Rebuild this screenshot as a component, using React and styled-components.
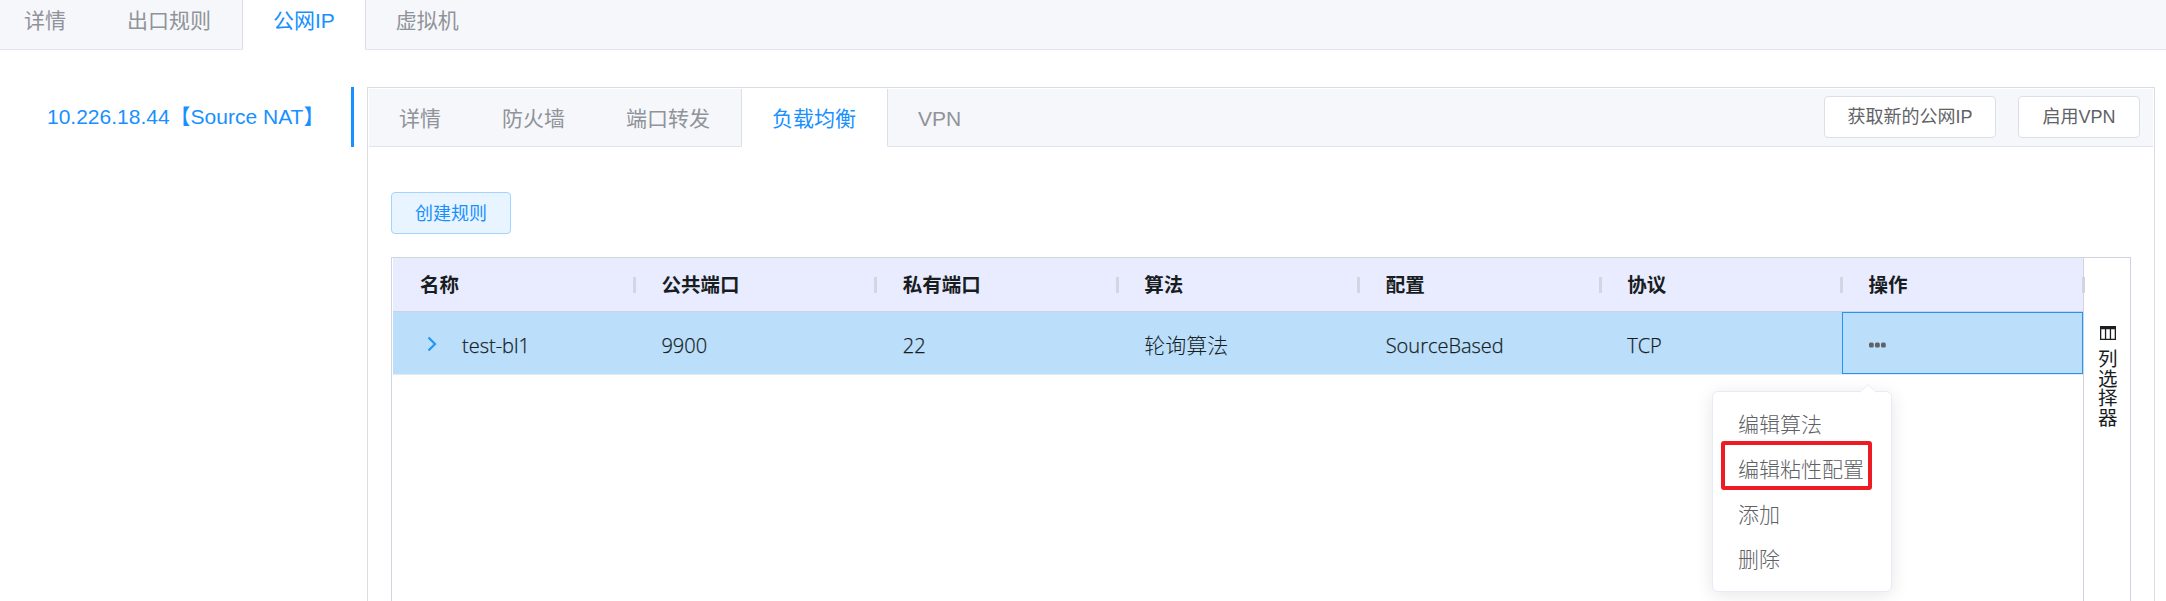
import React from 'react';
import styled, { createGlobalStyle, css } from 'styled-components';

const blue = '#1890ff';
const line = '#dcdfe6';
const uiFont = `"Open Sans", "Noto Sans CJK SC", sans-serif`;
const arial = `"Liberation Sans", "Noto Sans CJK SC", sans-serif`;

const Global = createGlobalStyle`
  * { box-sizing: border-box; }
  body { margin: 0; background: #fff; overflow: hidden; font-family: ${uiFont}; }
  button { font-family: inherit; margin: 0; }
`;

const Page = styled.div`
  height: 601px;
  display: flex;
  flex-direction: column;
  overflow: hidden;
`;

const TabBar = styled.nav`
  display: flex;
  flex: none;
  height: ${p => (p.$top ? 50 : 58)}px;
  margin-left: ${p => (p.$top ? -6 : 0)}px;
  background: #f5f7fb;
  font-family: ${arial};
  font-size: 21px;
  line-height: 30px;
  color: #909399;
`;

const Tab = styled.div`
  display: flex;
  align-items: center;
  padding: ${p => (p.$top ? '0 31px 8px 30px' : '2px 31px 0 30px')};
  border-bottom: 1px solid #dfe4ed;
  white-space: nowrap;
  ${p => p.$active && css`
    padding-right: ${p.$top ? 30 : 31}px;
    background: #fff;
    color: ${blue};
    border-bottom-color: #fff;
    border-left: 1px solid ${line};
    border-right: 1px solid ${line};
  `}
`;

const TabRest = styled.div`
  flex: 1;
  display: flex;
  justify-content: flex-end;
  gap: 22px;
  padding: 7px 13px 0 0;
  border-bottom: 1px solid #dfe4ed;
`;

const Body = styled.div`
  flex: 1;
  display: flex;
  padding: 37px 11px 0 0;
  min-height: 0;
`;

const Sidebar = styled.aside`
  width: 354px;
  margin-right: 13px;
`;

const AddressItem = styled.div`
  height: 60px;
  padding-left: 47px;
  line-height: 60px;
  border-right: 3px solid ${blue};
  color: ${blue};
  font-family: ${arial};
  font-size: 21px;
  white-space: nowrap;
`;

const Panel = styled.section`
  flex: 1;
  display: flex;
  flex-direction: column;
  border: 1px solid #dadde3;
  border-bottom: 0;
  padding: 1px 1px 0;
  min-width: 0;
`;

const Button = styled.button`
  height: 42px;
  width: ${p => p.$width}px;
  padding: 0;
  border: 1px solid ${p => (p.$primary ? '#a3d3ff' : line)};
  border-radius: 4px;
  background: ${p => (p.$primary ? '#e8f4ff' : '#fff')};
  color: ${p => (p.$primary ? blue : '#606266')};
  font-size: 18px;
  line-height: 38px;
`;

const Content = styled.div`
  flex: 1;
  display: flex;
  flex-direction: column;
  align-items: flex-start;
  padding: 45px 22px 0;
  min-height: 0;
`;

const Grid = styled.div`
  flex: 1;
  align-self: stretch;
  display: flex;
  margin-top: 23px;
  border: 1px solid #d0d4dc;
  border-bottom: 0;
  color: #181d1f;
`;

const Table = styled.div`
  flex: 1;
  padding-left: 1px;
`;

const HeaderRow = styled.div`
  display: grid;
  grid-template-columns: repeat(7, 1fr);
  height: 54px;
  background: #e9ecfe;
  border-bottom: 1px solid #ced2de;
  font-size: 19.5px;
  font-weight: 700;
  line-height: 30px;
`;

const HeaderCell = styled.div`
  display: flex;
  align-items: center;
  justify-content: space-between;
  padding-left: 27px;
  padding-top: 1px;
  min-width: 0;
`;

const Divider = styled.span`
  width: 3px;
  height: 16px;
  margin: 0 -1.5px 1px 0;
  background: #d3d6e0;
`;

const Row = styled.div`
  display: grid;
  grid-template-columns: repeat(7, 1fr);
  height: 63px;
  background: #bbdffb;
  border-bottom: 1px solid #e6eaef;
  font-size: 21px;
  font-weight: 300;
  line-height: 30px;
`;

const Cell = styled.div`
  position: relative;
  display: flex;
  align-items: center;
  padding: 3px 0 0 27px;
  min-width: 0;
  ${p => p.$latin && css`
    font-size: 20px;
    -webkit-text-stroke: 0.25px #181d1f;
    padding-top: 6px;
  `}
  ${p => p.$focused && css`
    padding: 4px 0 0 26px;
    border: 1px solid #2196f3;
  `}
`;

const Expand = styled.svg`
  width: 10px;
  height: 16px;
  margin: -5px 25px 0 7px;
`;

const Dots = styled.svg`
  width: 18px;
  height: 6px;
`;

const SidePick = styled.div`
  width: 47px;
  border-left: 1px solid #d0d4dc;
  display: flex;
  flex-direction: column;
  align-items: center;
  padding-top: 68px;
  padding-left: 2px;
  font-size: 19.5px;
`;

const PickLabel = styled.span`
  margin-top: 9px;
  width: 20px;
  line-height: 19.5px;
  word-break: break-all;
`;

const Menu = styled.ul`
  position: absolute;
  top: 78px;
  right: 190px;
  z-index: 2;
  width: 180px;
  height: 201px;
  margin: 0;
  padding: 10px 0 0;
  list-style: none;
  background: #fff;
  border: 1px solid #e6ebf5;
  border-radius: 6px;
  box-shadow: 0 3px 18px rgba(0, 0, 0, 0.1);
  color: #606266;
  font-size: 21px;
`;

const Arrow = styled.svg`
  position: absolute;
  top: -8px;
  left: 146px;
  width: 18px;
  height: 10px;
`;

const MenuItem = styled.li`
  position: relative;
  height: 45px;
  padding-left: 25px;
  line-height: 45px;
  white-space: nowrap;
`;

const Highlight = styled.span`
  position: absolute;
  left: 8px;
  top: -6px;
  width: 151px;
  height: 49px;
  border: 4px solid #ed1c24;
  border-radius: 3px;
`;

const columns = ['名称', '公共端口', '私有端口', '算法', '配置', '协议', '操作'];
const topTabs = ['详情', '出口规则', '公网IP', '虚拟机'];
const panelTabs = ['详情', '防火墙', '端口转发', '负载均衡', 'VPN'];
const actions = ['编辑算法', '编辑粘性配置', '添加', '删除'];

const Tabs = ({ items, active, top }) =>
  items.map((label, i) => (
    <Tab key={label} $active={i === active} $top={top}>
      {label}
    </Tab>
  ));

const ActionMenu = () => (
  <Menu>
    <Arrow viewBox="0 0 18 10">
      <path d="M0 9 L9 0.5 L18 9 V10 H0 Z" fill="#fff" />
      <path d="M0.5 8.5 L9 0.7 L17.5 8.5" fill="none" stroke="#e6ebf5" />
    </Arrow>
    {actions.map((label, i) => (
      <MenuItem key={label}>
        {label}
        {i === 1 && <Highlight />}
      </MenuItem>
    ))}
  </Menu>
);

export default function App() {
  return (
    <Page>
      <Global />
      <TabBar $top>
        <Tabs items={topTabs} active={2} top />
        <TabRest />
      </TabBar>
      <Body>
        <Sidebar>
          <AddressItem>10.226.18.44【Source NAT】</AddressItem>
        </Sidebar>
        <Panel>
          <TabBar>
            <Tabs items={panelTabs} active={3} />
            <TabRest>
              <Button $width={172}>获取新的公网IP</Button>
              <Button $width={122}>启用VPN</Button>
            </TabRest>
          </TabBar>
          <Content>
            <Button $primary $width={120}>创建规则</Button>
            <Grid>
              <Table>
                <HeaderRow>
                  {columns.map(name => (
                    <HeaderCell key={name}>
                      {name}
                      <Divider />
                    </HeaderCell>
                  ))}
                </HeaderRow>
                <Row>
                  <Cell $latin>
                    <Expand viewBox="0 0 10 16">
                      <path d="M1.5 1.5 L8 8 L1.5 14.5" fill="none" stroke="#2196f3" strokeWidth="2.2" />
                    </Expand>
                    test-bl1
                  </Cell>
                  <Cell $latin>9900</Cell>
                  <Cell $latin>22</Cell>
                  <Cell>轮询算法</Cell>
                  <Cell $latin>SourceBased</Cell>
                  <Cell $latin>TCP</Cell>
                  <Cell $focused>
                    <Dots viewBox="0 0 18 6">
                      <g fill="#606266">
                        <rect x="0" y="0.5" width="4.8" height="5" rx="1.6" />
                        <rect x="6" y="0.5" width="4.8" height="5" rx="1.6" />
                        <rect x="12" y="0.5" width="4.8" height="5" rx="1.6" />
                      </g>
                    </Dots>
                    <ActionMenu />
                  </Cell>
                </Row>
              </Table>
              <SidePick>
                <svg width="16" height="14" viewBox="0 0 16 14">
                  <path d="M0 0H16V14H0Z M1.3 3.2V12.8H4.9V3.2Z M6.2 3.2V12.8H9.8V3.2Z M11.1 3.2V12.8H14.7V3.2Z" fill="#181d1f" fillRule="evenodd" />
                </svg>
                <PickLabel>列选择器</PickLabel>
              </SidePick>
            </Grid>
          </Content>
        </Panel>
      </Body>
    </Page>
  );
}
